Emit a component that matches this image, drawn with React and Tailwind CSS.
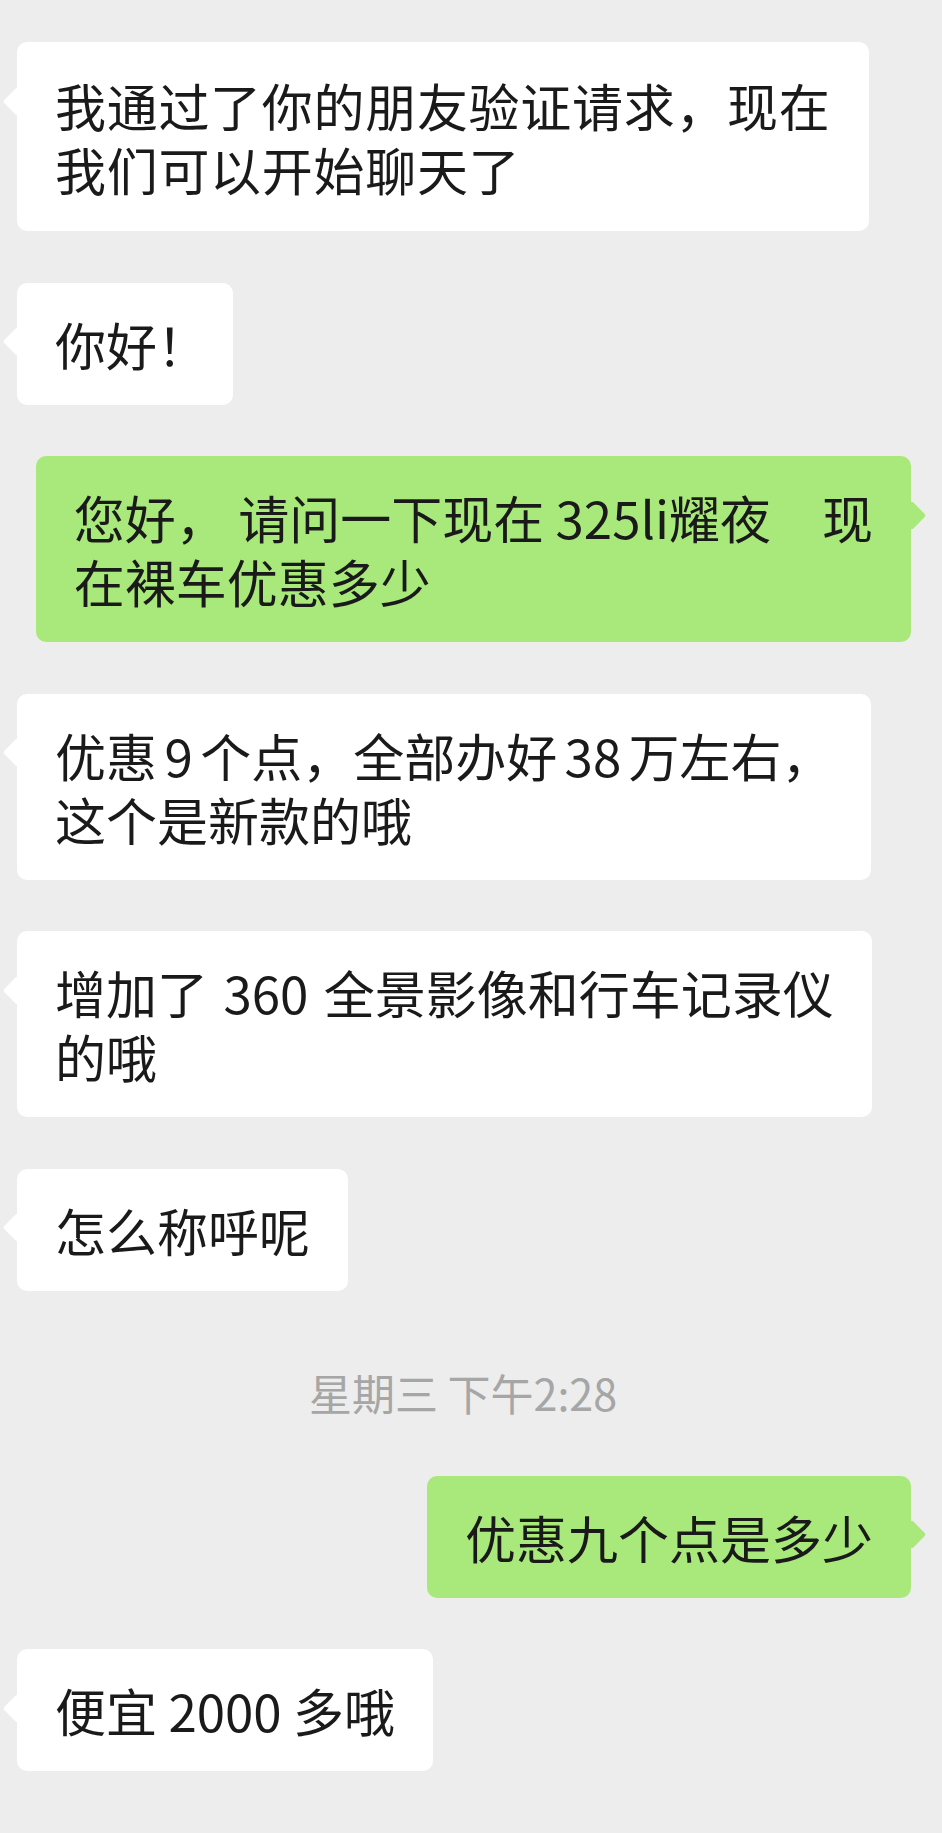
import React from 'react'

const FONT = { fontFamily: '"Noto Sans CJK SC", "Noto Sans", sans-serif' }

// fix: small per-message spacing tweaks so the bubbles keep their widths
const messages = [
  { id: 1, mine: false, lines: ['我通过了你的朋友验证请求，现在', '我们可以开始聊天了'], fix: 'py-[1.5px] [letter-spacing:0.7px]' },
  { id: 2, mine: false, lines: ['你好！'], fix: 'mr-[-13px]' },
  { id: 3, mine: true, lines: ['您好， 请问一下现在 325li耀夜\u3000现', '在裸车优惠多少'] },
  { id: 4, mine: false, lines: ['优惠 9 个点，全部办好 38 万左右，', '这个是新款的哦'], fix: '[word-spacing:-4px]' },
  { id: 5, mine: false, lines: ['增加了 360 全景影像和行车记录仪', '的哦'], fix: '[word-spacing:4px]' },
  { id: 6, mine: false, lines: ['怎么称呼呢'] },
  { id: 7, time: '星期三 下午2:28' },
  { id: 8, mine: true, lines: ['优惠九个点是多少'] },
  { id: 9, mine: false, lines: ['便宜 2000 多哦'] },
]

function Bubble({ mine, lines, fix = '' }) {
  return (
    <div className={mine ? 'flex justify-end pr-[31px]' : 'flex justify-start pl-[17px]'}>
      <div
        className={
          mine
            ? 'relative rounded-[10px] bg-[#a9e97b] px-[38px] py-[29px]'
            : 'relative rounded-[10px] bg-white px-[38px] py-[29px]'
        }
      >
        {/* little arrow pointing at the sender */}
        <span
          className={
            mine
              ? 'absolute right-[-10.5px] top-[48.5px] h-[21px] w-[21px] rotate-45 rounded-[3px] bg-[#a9e97b]'
              : 'absolute left-[-10.5px] top-[48.5px] h-[21px] w-[21px] rotate-45 rounded-[3px] bg-white'
          }
        />
        <p className={`relative whitespace-pre text-[51px] leading-[64px] text-[#1a1a1a] ${fix}`} style={FONT}>
          {lines.map((line, i) => (
            <React.Fragment key={i}>
              {i > 0 && <br />}
              {line}
            </React.Fragment>
          ))}
        </p>
      </div>
    </div>
  )
}

export default function App() {
  return (
    <div className="flex min-h-screen w-full flex-col gap-[51.5px] bg-[#ededed] pt-[42px] pb-[60px]">
      {messages.map((m) =>
        m.time ? (
          <div key={m.id} className="pt-[30px] pr-[16px] pb-[7px] text-center">
            <span className="text-[43px] leading-[40px] text-[#a6a6a6]" style={FONT}>
              {m.time}
            </span>
          </div>
        ) : (
          <Bubble key={m.id} mine={m.mine} lines={m.lines} fix={m.fix} />
        )
      )}
    </div>
  )
}
